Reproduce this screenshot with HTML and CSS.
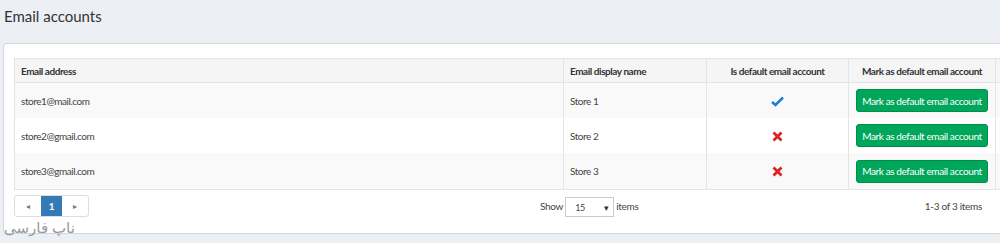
FILE: index.html
```html
<!DOCTYPE html>
<html lang="en">
<head>
    <meta charset="UTF-8">
    <meta name="viewport" content="width=device-width, initial-scale=1.0">
    <title>Email accounts</title>
    <link rel="stylesheet" href="styles.css">
</head>
<body>
    <div class="content-header">
        <h1>Email accounts</h1>
    </div>

    <div class="box">
        <table class="grid">
            <colgroup>
                <col class="col-address">
                <col class="col-name">
                <col class="col-default">
                <col class="col-mark">
                <col>
            </colgroup>
            <thead>
                <tr>
                    <th>Email address</th>
                    <th>Email display name</th>
                    <th class="center">Is default email account</th>
                    <th class="center">Mark as default email account</th>
                    <th></th>
                </tr>
            </thead>
            <tbody>
                <tr class="alt">
                    <td>store1@mail.com</td>
                    <td>Store 1</td>
                    <td class="center">
                        <svg class="icon" width="13" height="11" viewBox="0 0 13 11"><path d="M1 6 L4.5 9 L12 1.5" fill="none" stroke="#1f7fd0" stroke-width="2.6" stroke-linejoin="miter"/></svg>
                    </td>
                    <td class="center"><button class="btn-mark">Mark as default email account</button></td>
                    <td></td>
                </tr>
                <tr>
                    <td>store2@gmail.com</td>
                    <td>Store 2</td>
                    <td class="center">
                        <svg class="icon" width="11" height="11" viewBox="0 0 11 11"><path d="M1.5 1.5 L9.5 9.5 M9.5 1.5 L1.5 9.5" stroke="#dd2222" stroke-width="2.8"/></svg>
                    </td>
                    <td class="center"><button class="btn-mark">Mark as default email account</button></td>
                    <td></td>
                </tr>
                <tr class="alt">
                    <td>store3@gmail.com</td>
                    <td>Store 3</td>
                    <td class="center">
                        <svg class="icon" width="11" height="11" viewBox="0 0 11 11"><path d="M1.5 1.5 L9.5 9.5 M9.5 1.5 L1.5 9.5" stroke="#dd2222" stroke-width="2.8"/></svg>
                    </td>
                    <td class="center"><button class="btn-mark">Mark as default email account</button></td>
                    <td></td>
                </tr>
            </tbody>
        </table>

        <div class="grid-footer">
            <div class="pager">
                <span class="page-arrow">&#9666;</span>
                <span class="page-num">1</span>
                <span class="page-arrow">&#9656;</span>
            </div>
            <div class="sizer">
                <span>Show</span>
                <span class="select"><span>15</span><span class="caret">&#9662;</span></span>
                <span>items</span>
            </div>
            <div class="info">1-3 of 3 items</div>
        </div>

        <div class="watermark">ناپ فارسی</div>
    </div>
</body>
</html>
```

FILE: styles.css
```css
body {
    margin: 0;
    background-color: #ecf0f5;
    font-family: 'Lato', 'Noto Sans', sans-serif;
    color: #333;
    overflow: hidden;
    width: 1000px;
    height: 243px;
}

.content-header {
    padding: 6px 4px 0;
    height: 37px;
}

.content-header h1 {
    margin: 0;
    font-size: 15px;
    font-weight: normal;
    line-height: 20px;
    color: #333;
}

.box {
    position: relative;
    margin-left: 3px;
    width: 1020px;
    background-color: #fff;
    border: 1px solid #d2d6de;
    border-radius: 3px;
    padding: 14px 10px 16px 10px;
    box-sizing: border-box;
}

.grid {
    border-collapse: collapse;
    table-layout: fixed;
    width: 1000px;
    font-size: 10px;
    letter-spacing: -0.45px;
    border: 1px solid #e4e4e4;
}

.col-address { width: 549px; }
.col-name { width: 143px; }
.col-default { width: 142px; }
.col-mark { width: 147px; }

.grid th {
    background-color: #f5f5f5;
    height: 23px;
    padding: 0 6px;
    text-align: left;
    font-weight: bold;
    color: #333;
    border: 1px solid #e4e4e4;
    white-space: nowrap;
}

.grid td {
    height: 35px;
    padding: 0 6px;
    border-left: 1px solid #e4e4e4;
    border-right: 1px solid #e4e4e4;
    color: #444;
}

.grid tbody tr.alt td {
    background-color: #f9f9f9;
}

.grid tbody tr:last-child td {
    height: 36px;
    border-bottom: 1px solid #e4e4e4;
}

.grid .center {
    text-align: center;
}

.icon {
    display: inline-block;
    vertical-align: middle;
}

.btn-mark {
    background-color: #00a65a;
    color: #fff;
    border: 1px solid #008d4c;
    border-radius: 3px;
    font-family: inherit;
    font-size: 10px;
    letter-spacing: -0.4px;
    height: 23px;
    width: 132px;
    padding: 0;
    white-space: nowrap;
    cursor: pointer;
}

.grid-footer {
    display: grid;
    grid-template-columns: 526px auto 1fr;
    align-items: center;
    width: 976px;
    margin-top: 5px;
    font-size: 10px;
    letter-spacing: -0.3px;
    color: #444;
}

.pager {
    display: flex;
    width: 75px;
    height: 22px;
    border: 1px solid #ddd;
    border-radius: 3px;
    box-sizing: border-box;
    overflow: hidden;
}

.page-arrow {
    width: 26px;
    display: flex;
    align-items: center;
    justify-content: center;
    font-size: 8px;
    color: #777;
}

.page-num {
    width: 21px;
    display: flex;
    align-items: center;
    justify-content: center;
    background-color: #337ab7;
    color: #fff;
    font-size: 10px;
    font-weight: bold;
}

.sizer {
    display: flex;
    align-items: center;
    gap: 2px;
}

.select {
    display: flex;
    align-items: center;
    justify-content: space-between;
    width: 49px;
    height: 20px;
    box-sizing: border-box;
    border: 1px solid #ccc;
    padding: 0 4px 0 9px;
    font-size: 9px;
    margin-top: 2px;
}

.caret {
    font-size: 9px;
    color: #333;
}

.info {
    text-align: right;
    padding-right: 8px;
}

.watermark {
    position: absolute;
    left: 0;
    top: 173px;
    font-family: 'Noto Sans', 'DejaVu Sans', sans-serif;
    font-size: 15px;
    color: #999;
    direction: rtl;
}
```
